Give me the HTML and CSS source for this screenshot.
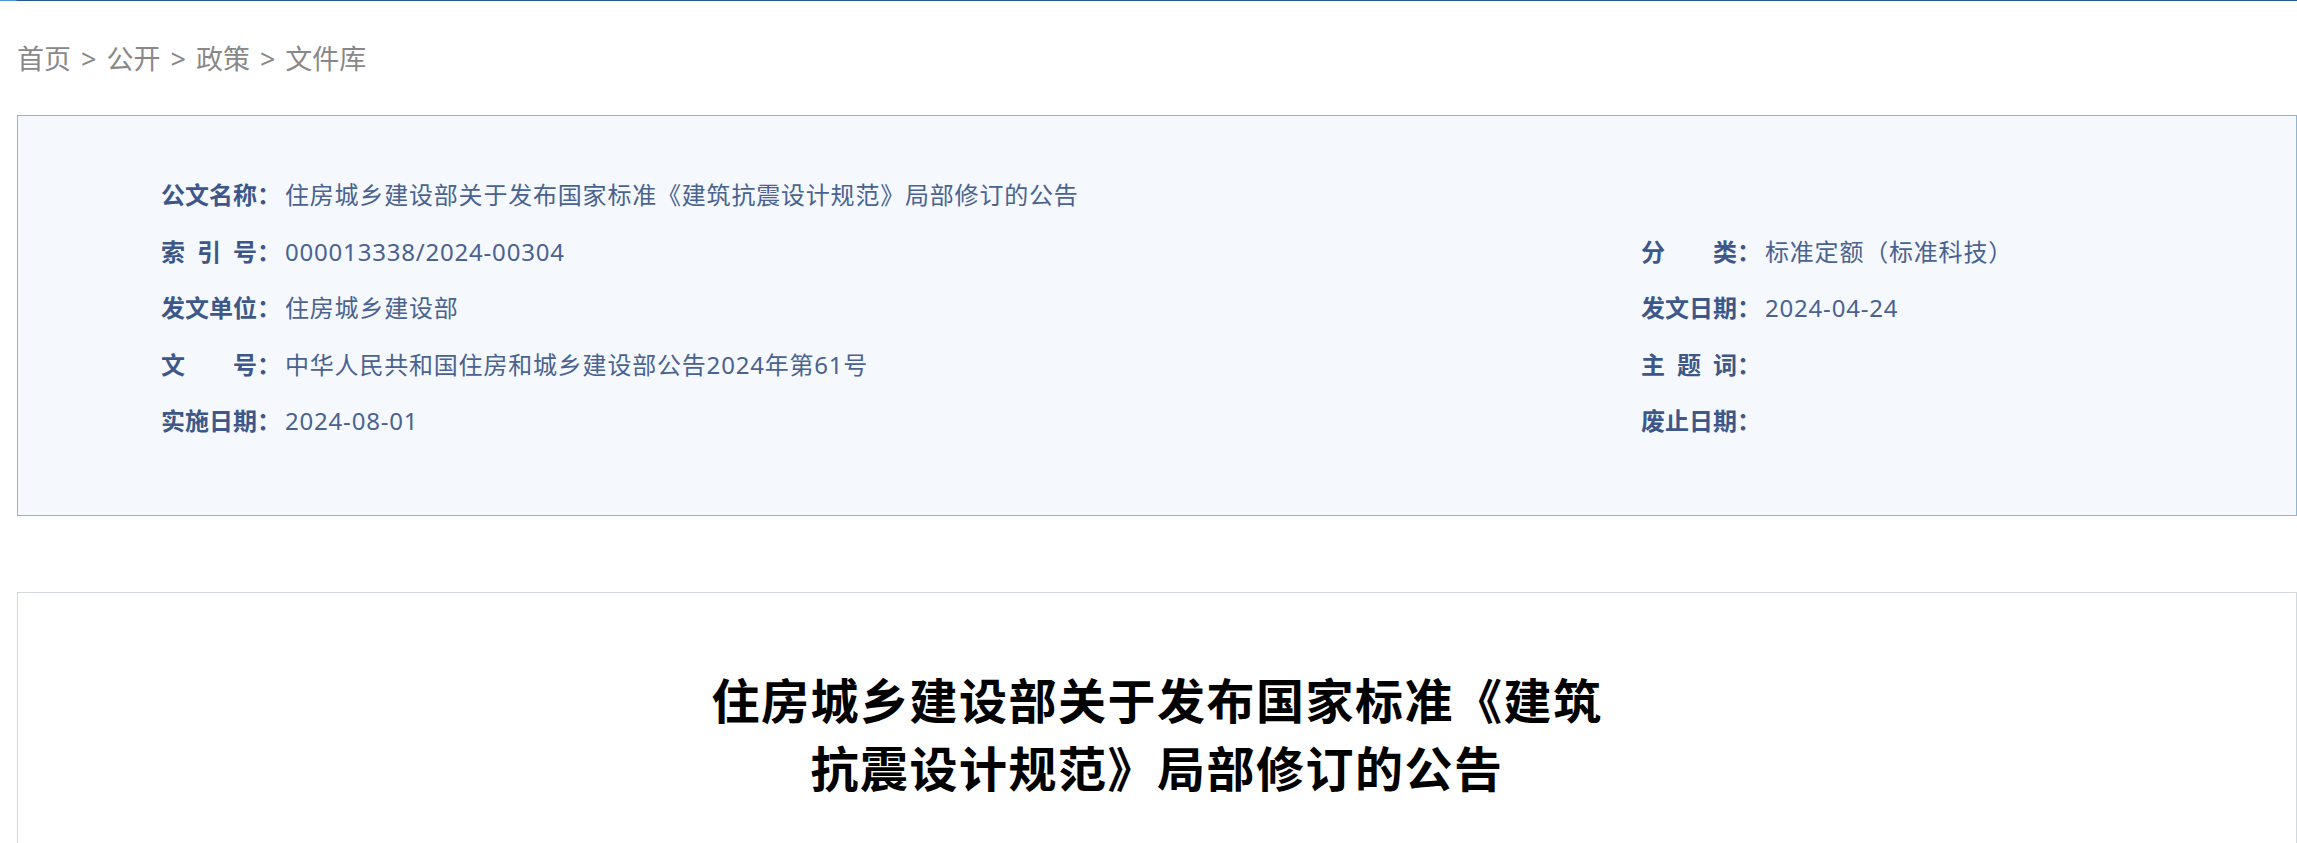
FILE: index.html
```html
<!DOCTYPE html>
<html lang="zh-CN">
<head>
  <meta charset="UTF-8" />
  <meta name="viewport" content="width=device-width, initial-scale=1.0"/>
  <title>住房城乡建设部关于发布国家标准《建筑抗震设计规范》局部修订的公告</title>
  <link rel="stylesheet" href="styles.css">
</head>
<body>
  <div class="topline"></div>

  <nav class="crumbs">
    <a href="#">首页</a><span class="sep">&gt;</span><a href="#">公开</a><span class="sep">&gt;</span><a href="#">政策</a><span class="sep">&gt;</span><a href="#">文件库</a>
  </nav>

  <section class="info">
    <div class="info-grid">
      <div class="item wide"><span class="lbl">公文名称</span><span class="colon">：</span><span class="val">住房城乡建设部关于发布国家标准《建筑抗震设计规范》局部修订的公告</span></div>
      <div class="item"><span class="lbl">索引号</span><span class="colon">：</span><span class="val">000013338/2024-00304</span></div>
      <div class="item"><span class="lbl">分类</span><span class="colon">：</span><span class="val">标准定额（标准科技）</span></div>
      <div class="item"><span class="lbl">发文单位</span><span class="colon">：</span><span class="val">住房城乡建设部</span></div>
      <div class="item"><span class="lbl">发文日期</span><span class="colon">：</span><span class="val">2024-04-24</span></div>
      <div class="item"><span class="lbl">文号</span><span class="colon">：</span><span class="val">中华人民共和国住房和城乡建设部公告2024年第61号</span></div>
      <div class="item"><span class="lbl">主题词</span><span class="colon">：</span><span class="val"></span></div>
      <div class="item"><span class="lbl">实施日期</span><span class="colon">：</span><span class="val">2024-08-01</span></div>
      <div class="item"><span class="lbl">废止日期</span><span class="colon">：</span><span class="val"></span></div>
    </div>
  </section>

  <article class="doc">
    <h1 class="doc-title">住房城乡建设部关于发布国家标准《建筑抗震设计规范》局部修订的公告</h1>
  </article>
</body>
</html>
```

FILE: styles.css
```css
* { margin: 0; padding: 0; box-sizing: border-box; }
body {
  font-family: "Noto Sans", "Noto Sans CJK SC", sans-serif;
  background: #fff;
  color: #333;
  overflow: hidden;
}
.topline {
  height: 1px;
  background: linear-gradient(90deg, #4d94d8 0, #4d94d8 16px, #24598f 17px, #24598f 100%);
}
.crumbs {
  padding: 38px 0 0 17px;
  font-size: 27px;
  line-height: 40px;
  color: #888;
}
.crumbs a {
  color: #888;
  text-decoration: none;
}
.crumbs .sep {
  margin: 0 10px;
}
.info {
  margin: 36px 0 0 17px;
  height: 401px;
  padding: 51px 0 0 143px;
  background: #f5f9fe;
  border: 1px solid #94b3cc;
}
.info-grid {
  display: grid;
  grid-template-columns: 1480px 1fr;
}
.item {
  display: flex;
  font-size: 24px;
  line-height: 56.5px;
  white-space: nowrap;
}
.item.wide {
  grid-column: 1 / 3;
}
.lbl {
  display: inline-block;
  width: 96px;
  text-align: justify;
  text-align-last: justify;
  font-weight: 700;
  color: #3d5888;
}
.colon {
  font-weight: 700;
  color: #3d5888;
}
.val {
  margin-left: 4px;
  letter-spacing: 0.8px;
  color: #4a6290;
}
.doc {
  margin: 76px 0 0 17px;
  height: 260px;
  padding-top: 74px;
  border: 1px solid #d3d8dc;
  border-bottom: 0;
}
.doc-title {
  max-width: 910px;
  margin: 0 auto;
  text-align: center;
  font-size: 48px;
  letter-spacing: 1.5px;
  line-height: 68px;
  font-weight: 700;
  color: #000;
}
```
